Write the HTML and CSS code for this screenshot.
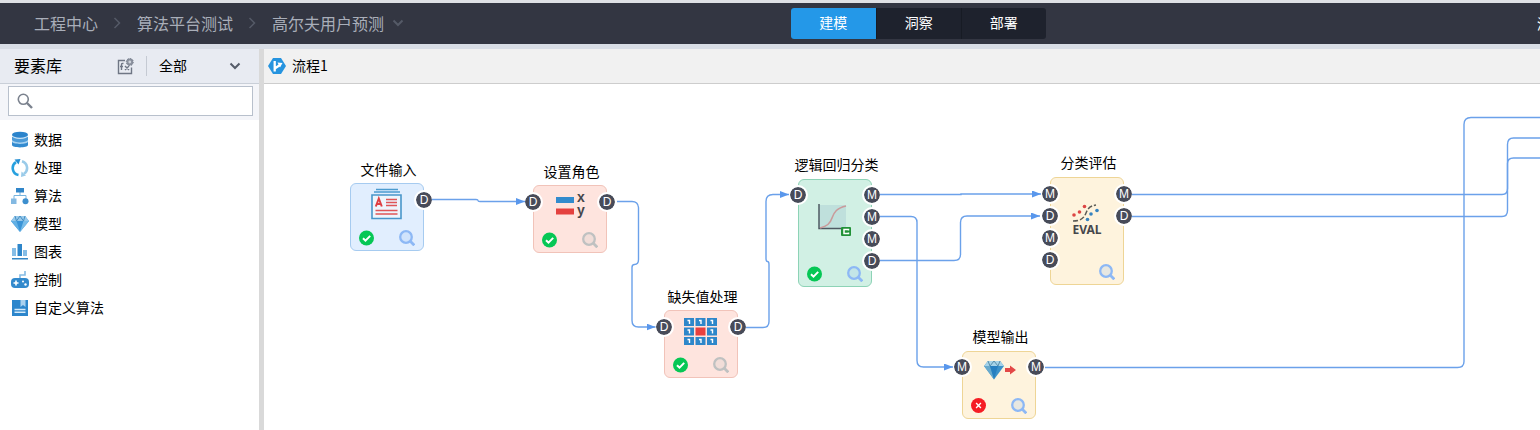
FILE: index.html
```html
<!DOCTYPE html>
<html lang="zh-CN">
<head>
<meta charset="utf-8">
<title>高尔夫用户预测</title>
<link rel="stylesheet" href="styles.css">
</head>
<body>
<svg class="defs" aria-hidden="true">
  <symbol id="ok" viewBox="0 0 16 16"><circle cx="7.500" cy="8" r="7.500" fill="#06c755"/><path d="M4 8.200 6.500 10.600l4.700-4.700" fill="none" stroke="#fff" stroke-width="2"/></symbol>
  <symbol id="fail" viewBox="0 0 16 16"><circle cx="7.500" cy="7.500" r="7.500" fill="#f51d24"/><path d="m5.100 5.100 4.800 4.800m0-4.800-4.800 4.800" fill="none" stroke="#fff" stroke-width="1.400"/></symbol>
  <symbol id="lens" viewBox="0 0 16 16"><circle cx="7" cy="7" r="5.800" fill="currentColor" fill-opacity=".2" stroke="currentColor" stroke-width="2.300"/><path d="m11.300 11.300 4 4" stroke="currentColor" stroke-width="2.800"/></symbol>
  <symbol id="sep" viewBox="0 0 8 12"><path d="m1.500 1 5 5-5 5" fill="none" stroke="currentColor" stroke-width="1.500"/></symbol>
  <symbol id="down" viewBox="0 0 12 8"><path d="m1.500 1.500 4.500 4.500 4.500-4.500" fill="none" stroke="currentColor" stroke-width="2"/></symbol>
</svg>
<header class="topbar">
  <nav class="crumbs" aria-label="路径">
    <a href="#">工程中心</a>
    <svg class="sep" aria-hidden="true"><use href="#sep"/></svg>
    <a href="#">算法平台测试</a>
    <svg class="sep" aria-hidden="true"><use href="#sep"/></svg>
    <button class="current" type="button">高尔夫用户预测<svg class="crumb-down" aria-hidden="true"><use href="#down"/></svg></button>
  </nav>
  <div class="modes">
    <button class="mode active" type="button">建模</button>
    <button class="mode" type="button">洞察</button>
    <button class="mode" type="button">部署</button>
  </div>
  <div class="account"><button type="button">测试</button></div>
</header>
<div class="workspace">
  <aside class="sidebar">
    <div class="side-head">
      <h2>要素库</h2>
      <button class="fx" type="button" aria-label="函数设置">
        <svg viewBox="0 0 17 17" width="17" height="17"><path d="M8 2.500H1.500v13h13V9.500M6.500 5.500c-1.500-.5-2 .3-2 1.500v5M3 8.500h3M8 8l4 4m0-4-4 4" fill="none" stroke="#6f7685" stroke-width="1.400"/><circle cx="12.800" cy="4" r="2.400" fill="#cdd2da" stroke="#8a909d" stroke-width="2"/><circle cx="12.800" cy="4" r="3.500" fill="none" stroke="#737b8a" stroke-width="1" stroke-dasharray="1.400 1.300"/></svg>
      </button>
      <div class="filter">
        <select aria-label="要素范围"><option>全部</option></select>
        <svg class="filter-down" aria-hidden="true"><use href="#down"/></svg>
      </div>
    </div>
    <div class="search-zone">
      <label class="search">
        <svg viewBox="0 0 16 16" width="16" height="16" aria-hidden="true"><circle cx="6.300" cy="6.300" r="5" fill="none" stroke="#7b828e" stroke-width="1.600"/><path d="m10 10 5 5" stroke="#7b828e" stroke-width="2.400"/></svg>
        <input type="search" aria-label="搜索">
      </label>
    </div>
    <ul class="library">
      <li><a href="#"><svg viewBox="0 0 18 18"><path d="M1 10v4c0 3.200 16 3.200 16 0v-4c-2 3-14 3-16 0" fill="#338bd0"/><path d="M1 6v4.500c0 3.200 16 3.200 16 0V6c-2 3-14 3-16 0" fill="#a9d3f1"/><path d="M1 6v3c2 3.200 14 3.200 16 0V6" fill="#4c9bd8"/><ellipse cx="9" cy="4.500" rx="8" ry="3.600" fill="#c9e3f6"/><ellipse cx="9" cy="3.700" rx="8" ry="3" fill="#2b84cc"/></svg><span>数据</span></a></li>
      <li><a href="#"><svg viewBox="0 0 18 18" fill="none" stroke-width="2.600"><path d="M7.500 16A7 7 0 0 1 5 3.200" stroke="#27a1df"/><path d="M11 2.300a7 7 0 0 1 2 12.500" stroke="#9acbe9"/><path d="m3.500.5 6-.5-2 5.500z" fill="#258fd3"/><path d="m10.500 12.500-.5 5.500 5-1.500z" fill="#9acbe9"/></svg><span>处理</span></a></li>
      <li><a href="#"><svg viewBox="0 0 18 18"><path d="M9 5v4M3 12V8.500h12V12" fill="none" stroke="#78b4df"/><path d="M5 1h8v4.500H5z" fill="#3186c9"/><path d="M0 11.500h5.500V17H0z" fill="#83b9e2"/><circle cx="14.500" cy="14.200" r="3" fill="#3d8fce"/></svg><span>算法</span></a></li>
      <li><a href="#"><svg viewBox="0 0 18 18"><path d="M4 1h10l4 5-9 11L0 6z" fill="#3a94d7"/><path d="m4 1-4 5h18l-4-5z" fill="#98c9eb"/><path d="m4 1 1.500 5L9 1l3.500 5L14 1" fill="none" stroke="#458fc3"/><path d="m0 6 9 11L5.500 6z" fill="#62b0e5"/><path d="m18 6-9 11 3.500-11z" fill="#79bde9"/></svg><span>模型</span></a></li>
      <li><a href="#"><svg viewBox="0 0 18 18"><path d="M1 5h4v8H1zm11 2h4v6h-4z" fill="#85bde6"/><path d="M6.500 1h4.500v12H6.500z" fill="#2e86ca"/><path d="M1 15h16v1.500H1z" fill="#3587c5"/></svg><span>图表</span></a></li>
      <li><a href="#"><svg viewBox="0 0 18 18"><path d="M9 7V4h5V0" fill="none" stroke="#85bce5" stroke-width="1.600"/><rect y="7" width="18" height="10" rx="4" fill="#338acd"/><path d="M5 9.500v5M2.500 12h5" stroke="#fff" stroke-width="1.600"/><circle cx="12" cy="10.500" r="1" fill="#fff"/><circle cx="14.500" cy="13.500" r="1.200" fill="#fff"/></svg><span>控制</span></a></li>
      <li><a href="#"><svg viewBox="0 0 18 18"><path d="M1 1h16v16H1z" fill="#2c86cc"/><path d="M9.500 1h5v7L12 6 9.500 8z" fill="#a9d1ef"/><path d="M3.500 10.500h11M3.500 13.200h11" stroke="#d6ebfa" stroke-width="1.500"/></svg><span>自定义算法</span></a></li>
    </ul>
  </aside>
  <main class="editor">
    <div class="tabs">
      <button class="tab" type="button"><svg viewBox="0 0 18 18" width="18" height="18" aria-hidden="true"><path d="M5 1h8l5 8-5 8H5L0 9z" fill="#2694df"/><path d="M6.700 4v10.500M6.700 11.500 12 8" fill="none" stroke="#fff" stroke-width="2.300"/><path d="m9.500 5.500 5 .5-2.500 4.500z" fill="#fff"/></svg><span>流程1</span></button>
    </div>
    <div class="canvas">
      <svg class="wires" viewBox="264 84 1276 346" width="1276" height="346" aria-hidden="true">
        <defs><marker id="arrow" viewBox="0 0 9 7" markerWidth="9" markerHeight="7" markerUnits="userSpaceOnUse" refX="9" refY="3.500" orient="auto"><path d="M0 0v7l9-3.500z" fill="#5997ec"/></marker></defs>
        <g class="arrows">
          <path d="M432 199.500h44q2 0 2 1t2 1h45"/>
          <path d="M617 201.500h15q6 0 6.500 6v52q0 5-4 5-2.500 0-2.500 3v53q0 6.500 6.500 6.500h17"/>
          <path d="M880 194.500h81v-.5h80"/>
          <path d="M746 327.500h17q6 0 6-6v-57q0-3-1.500-3t-1.500-3v-57q0-7 7-7h16"/>
          <path d="M880 216.500h31q6 0 6 6v138q0 6.500 6.500 6.500H953"/>
          <path d="M880 260.500h74q6.500 0 6.500-6v-32q0-6.500 6.500-6.500h73"/>
        </g>
        <path d="M1132 194.500h370q5.500 0 5.500-6v-25q0-5.500 6-5.500H1540"/>
        <path d="M1132 216.500h370q5.500 0 5.500-6v-66q0-6.500 6-6.500H1540"/>
        <path d="M1045 367.500h412.500q6.500 0 6.500-6v-237q0-7 7-7H1540"/>
      </svg>

      <section class="node blue file">
        <h3>文件输入</h3>
        <div class="card">
          <svg class="glyph" viewBox="0 0 36 36"><path d="M7 1.500h22M5 4h26" stroke="#4b9bcf" stroke-width="1.500"/><path d="M3 7h29v23.500H3z" fill="#eef5fc" stroke="#4996ca" stroke-width="1.600"/><path d="m6.800 18.500 3-8 3 8M8 16h3.500" fill="none" stroke="#df3f43" stroke-width="2"/><path d="M17 11.500h11M17 14.500h11M17 17.500h11M6.500 22.500h22M6.500 26h22" stroke="#df5557" stroke-width="1.400"/></svg>
          <div class="state"><svg><use href="#ok"/></svg><svg class="lens"><use href="#lens"/></svg></div>
          <div class="ports out"><span>D</span></div>
        </div>
      </section>
      <section class="node red role">
        <h3>设置角色</h3>
        <div class="card">
          <svg class="glyph" viewBox="0 0 36 36"><path d="M4 7h18v6H4z" fill="#328bcd"/><path d="M4 18.500h18v6H4z" fill="#e4413f"/><text x="25" y="12">x</text><text x="25" y="25">y</text></svg>
          <div class="state"><svg><use href="#ok"/></svg><svg class="lens"><use href="#lens"/></svg></div>
          <div class="ports in"><span>D</span></div><div class="ports out"><span>D</span></div>
        </div>
      </section>
      <section class="node red missing">
        <h3>缺失值处理</h3>
        <div class="card">
          <svg class="glyph" viewBox="0 0 36 36"><path d="M1 3h10v8H1zm11.500 0h10v8h-10zM24 3h10v8H24zM1 12.500h10v8H1zm23 0h10v8H24zM1 22h10v8H1zm11.500 0h10v8h-10zM24 22h10v8H24z" fill="#2e87ca"/><path d="M12.500 12.500h10v8h-10z" fill="#e8403f"/><path d="M4.500 5.500h2V9M16 5.500h2V9M27.500 5.500h2V9M4.500 15h2v3.500m21-3.500h2v3.500M4.500 24.500h2V28M16 24.500h2V28m9.500-3.500h2V28" fill="none" stroke="#fff" stroke-width="1.400"/></svg>
          <div class="state"><svg><use href="#ok"/></svg><svg class="lens"><use href="#lens"/></svg></div>
          <div class="ports in"><span>D</span></div><div class="ports out"><span>D</span></div>
        </div>
      </section>
      <section class="node green tall logistic">
        <h3>逻辑回归分类</h3>
        <div class="card">
          <svg class="glyph" viewBox="0 0 36 36"><path d="M2 2h27v24H2z" fill="#bfe0dc"/><path d="M2 1v24.500h22" fill="none" stroke="#4f5962" stroke-width="1.500"/><path d="M3 25c7-2 10-4 12-10S20 5 29 3" fill="none" stroke="#c99b9b" stroke-width="1.600"/><rect x="24" y="24" width="10" height="9" rx="1" fill="#219237"/><path d="M31.500 27.500V26.500h-4.500v4h4.500v-1" fill="none" stroke="#fff" stroke-width="1.500"/></svg>
          <div class="state"><svg><use href="#ok"/></svg><svg class="lens"><use href="#lens"/></svg></div>
          <div class="ports in"><span>D</span></div><div class="ports out"><span>M</span><span>M</span><span>M</span><span>D</span></div>
        </div>
      </section>
      <section class="node yellow tall eval">
        <h3>分类评估</h3>
        <div class="card">
          <svg class="glyph" viewBox="0 0 36 36"><path d="M4 20c8 0 11-3 13-8s4-7 10-8" fill="none" stroke="#5c5b55" stroke-width="1.500" stroke-dasharray="5 2"/><g fill="#dd4544"><circle cx="5" cy="14" r="1.800"/><circle cx="10.500" cy="11" r="1.800"/><circle cx="15.500" cy="5.500" r="1.800"/></g><g fill="#3683c0"><circle cx="18.500" cy="18.500" r="1.800"/><circle cx="22" cy="13" r="1.800"/><circle cx="28" cy="9.500" r="1.800"/></g><text class="eval-text" x="18" y="33">EVAL</text></svg>
          <div class="state"><svg class="lens"><use href="#lens"/></svg></div>
          <div class="ports in"><span>M</span><span>D</span><span>M</span><span>D</span></div><div class="ports out"><span>M</span><span>D</span></div>
        </div>
      </section>
      <section class="node yellow output">
        <h3>模型输出</h3>
        <div class="card">
          <svg class="glyph" viewBox="0 0 36 36"><path d="M7 5h12l4 5-10 13.500L3 10z" fill="#3b91c9"/><path d="M7 5h12l4 5H3z" fill="#a5d3e9"/><path d="m7 5 2 5 4-5 4 5 2-5" fill="none" stroke="#578eaa"/><path d="m3 10 10 13.500L9 10z" fill="#68aacd"/><path d="M9 10h8l-4 13z" fill="#267fc0"/><path d="M24 12h5V9.500l6 4.500-6 4.500V16h-5z" fill="#e34847"/></svg>
          <div class="state"><svg><use href="#fail"/></svg><svg class="lens"><use href="#lens"/></svg></div>
          <div class="ports in"><span>M</span></div><div class="ports out"><span>M</span></div>
        </div>
      </section>
    </div>
  </main>
</div>
</body>
</html>
```
FILE: styles.css
```css
* { box-sizing: border-box; }
html, body { height: 100%; }
body {
  margin: 0;
  display: flex;
  flex-direction: column;
  overflow: hidden;
  background: #fff;
  color: #000;
  font: 14px/18px "Noto Sans CJK SC", sans-serif;
}
button, select, input { font: inherit; color: inherit; border: 0; padding: 0; background: none; }
a { color: inherit; text-decoration: none; }
h2, h3, ul { margin: 0; padding: 0; font-weight: inherit; list-style: none; }
svg { display: block; flex: none; }
.defs { position: absolute; width: 0; height: 0; }

.topbar {
  flex: none;
  display: grid;
  grid-template-columns: minmax(0, 8fr) auto minmax(0, 5fr);
  align-items: center;
  height: 49px;
  border-top: 3px solid #dfe1e5;
  border-bottom: 5px solid #d8dde5;
  background: #333642;
  overflow: hidden;
}
.crumbs { display: flex; align-items: center; padding: 0 0 2px 34px; font-size: 16px; line-height: 24px; color: #a9aeb9; white-space: nowrap; }
.sep { width: 8px; height: 12px; margin: 0 16px 0 15px; color: #555a67; }
.current { display: flex; align-items: center; gap: 8px; }
.crumb-down { width: 12px; height: 8px; color: #555a67; }
.modes { display: flex; border-radius: 3px; overflow: hidden; background: #1e222d; }
.mode { width: 85px; height: 31px; padding-bottom: 4px; color: #fff; border-left: 1px solid #171b24; }
.mode.active { background: #2498e8; border-left: 0; }
.account { display: flex; justify-content: flex-end; margin-right: -25px; padding-bottom: 1px; color: #fff; }

.workspace { flex: 1; min-height: 0; display: flex; }
.sidebar { flex: none; width: 264px; border-right: 5px solid #d9d9d9; }
.side-head { display: flex; align-items: center; height: 35px; padding: 0 14px; border-bottom: 1px solid #c9cfd8; background: #e8ebf2; }
.side-head h2 { flex: 1; padding-bottom: 2px; font-size: 16px; }
.fx { margin-right: 12px; }
.filter { display: flex; align-items: center; width: 99px; padding: 0 4px 0 12px; border-left: 1px solid #c5cad3; }
.filter select { flex: 1; appearance: none; outline: 0; padding-bottom: 2px; }
.filter-down { width: 12px; height: 8px; color: #555c69; }
.search-zone { padding: 2px 6px 4px 8px; background: #f4f5f9; }
.search { display: flex; align-items: center; gap: 8px; height: 30px; padding: 0 8px; border: 1px solid #b8c0cc; background: #fff; }
.search input { flex: 1; min-width: 0; outline: 0; }
.library { padding-top: 6px; }
.library a { display: flex; align-items: center; gap: 5px; height: 28px; padding-left: 11px; }
.library svg { width: 18px; height: 18px; }
.library span, .tab span { padding-bottom: 2px; }

.editor { flex: 1; min-width: 0; display: flex; flex-direction: column; }
.tabs { flex: none; height: 35px; display: flex; background: #f1f1f1; border-bottom: 1px solid #cdcdcd; }
.tab { display: flex; align-items: center; gap: 6px; padding: 0 4px; }
.canvas { position: relative; flex: 1; overflow: hidden; }
.wires { position: absolute; z-index: 1; left: 0; top: 0; pointer-events: none; fill: none; stroke: #6ba1ea; stroke-width: 1.4; }
.arrows path { marker-end: url(#arrow); }
.wires marker path { stroke: none; }

/* Nodes of the flow, placed freely on the canvas */
.node { position: absolute; width: 74px; display: flex; flex-direction: column; align-items: center; gap: 5px; }
.node h3 { padding-left: 3px; white-space: nowrap; font-size: 14px; }
.card { position: relative; width: 74px; height: 68px; padding: 4px 8px; display: flex; flex-direction: column; align-items: center; justify-content: space-between; border: 1px solid; border-radius: 6px; }
.tall .card { height: 108px; padding-top: 23px; }
.tall, .output { gap: 6px; }
.file { left: 86px; top: 76px; }
.role { left: 269px; top: 78px; }
.missing { left: 400px; top: 203px; }
.logistic { left: 534px; top: 71px; }
.eval { left: 786px; top: 69px; }
.output { left: 698px; top: 243px; }
.blue .card { background: #e1eefe; border-color: #a6cbf0; }
.red .card { background: #fee4de; border-color: #f1c3b9; }
.green .card { background: #d1f0e4; border-color: #8dd3b6; }
.yellow .card { background: #fef3dd; border-color: #eed596; }
.glyph { width: 36px; height: 36px; overflow: visible; }
.glyph text { font: bold 14px "Liberation Sans", sans-serif; fill: #45464b; }
.glyph .eval-text { font: bold 12px "Noto Sans", sans-serif; text-anchor: middle; }
.state { align-self: stretch; display: flex; }
.state svg { width: 16px; height: 16px; }
.state .lens { margin-left: auto; color: #8db8f5; }
.red .state .lens { color: #bfc1c1; }
.ports { position: absolute; top: 6px; display: flex; flex-direction: column; gap: 2px; }
.logistic .ports, .output .ports { top: 5px; }
.in { left: -11px; }
.out { right: -11px; }
.ports span { width: 20px; height: 20px; border: 2px solid #fff; border-radius: 50%; background: #474b59; background-clip: padding-box; color: #fff; font: 12px/16px "Liberation Sans", sans-serif; text-align: center; }
```
